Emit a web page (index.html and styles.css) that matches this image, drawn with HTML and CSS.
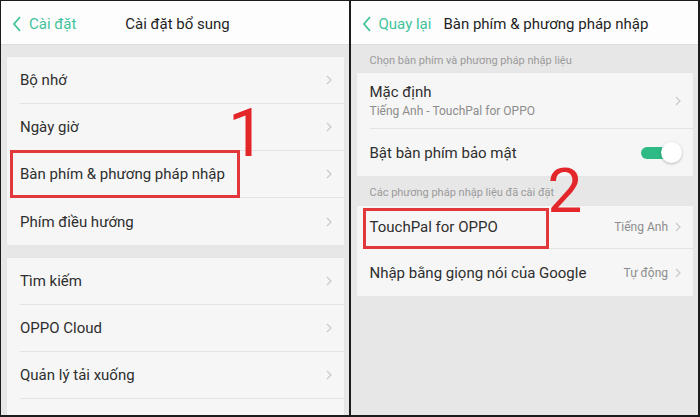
FILE: index.html
```html
<!DOCTYPE html>
<html lang="vi">
<head>
<meta charset="utf-8">
<link rel="stylesheet" href="styles.css">
</head>
<body>
<div class="frame">
  <section class="panel">
    <header class="topbar">
      <span class="back"><svg class="back-icon" viewBox="0 0 10 18"><polyline points="8,2 2,9 8,16"/></svg>Cài đặt</span>
      <span class="title title-left">Cài đặt bổ sung</span>
    </header>
    <div class="content content-left">
      <div class="card">
        <div class="row"><span class="label">Bộ nhớ</span><svg class="chev" viewBox="0 0 6 10"><polyline points="1,1 5,5 1,9"/></svg></div>
        <div class="row"><span class="label">Ngày giờ</span><svg class="chev" viewBox="0 0 6 10"><polyline points="1,1 5,5 1,9"/></svg></div>
        <div class="row"><span class="label">Bàn phím &amp; phương pháp nhập</span><svg class="chev" viewBox="0 0 6 10"><polyline points="1,1 5,5 1,9"/></svg></div>
        <div class="row"><span class="label">Phím điều hướng</span><svg class="chev" viewBox="0 0 6 10"><polyline points="1,1 5,5 1,9"/></svg></div>
      </div>
      <div class="card card-gap">
        <div class="row"><span class="label">Tìm kiếm</span><svg class="chev" viewBox="0 0 6 10"><polyline points="1,1 5,5 1,9"/></svg></div>
        <div class="row"><span class="label">OPPO Cloud</span><svg class="chev" viewBox="0 0 6 10"><polyline points="1,1 5,5 1,9"/></svg></div>
        <div class="row"><span class="label">Quản lý tải xuống</span><svg class="chev" viewBox="0 0 6 10"><polyline points="1,1 5,5 1,9"/></svg></div>
        <div class="row row-cut"><span class="label">Hướng dẫn</span><svg class="chev" viewBox="0 0 6 10"><polyline points="1,1 5,5 1,9"/></svg></div>
      </div>
    </div>
    <div class="mark mark-1"></div>
    <div class="num num-1">1</div>
  </section>

  <section class="panel">
    <header class="topbar">
      <span class="back"><svg class="back-icon" viewBox="0 0 10 18"><polyline points="8,2 2,9 8,16"/></svg>Quay lại</span>
      <span class="title title-right">Bàn phím &amp; phương pháp nhập</span>
    </header>
    <div class="content">
      <div class="section-label">Chọn bàn phím và phương pháp nhập liệu</div>
      <div class="card">
        <div class="row row-tall">
          <div class="stack"><span class="label">Mặc định</span><span class="sub">Tiếng Anh - TouchPal for OPPO</span></div>
          <svg class="chev" viewBox="0 0 6 10"><polyline points="1,1 5,5 1,9"/></svg>
        </div>
        <div class="row">
          <span class="label">Bật bàn phím bảo mật</span>
          <span class="toggle"><span class="knob"></span></span>
        </div>
      </div>
      <div class="section-label section-label-2">Các phương pháp nhập liệu đã cài đặt</div>
      <div class="card">
        <div class="row row-short"><span class="label">TouchPal for OPPO</span><span class="value">Tiếng Anh<svg class="chev" viewBox="0 0 6 10"><polyline points="1,1 5,5 1,9"/></svg></span></div>
        <div class="row"><span class="label">Nhập bằng giọng nói của Google</span><span class="value">Tự động<svg class="chev" viewBox="0 0 6 10"><polyline points="1,1 5,5 1,9"/></svg></span></div>
      </div>
    </div>
    <div class="mark mark-2"></div>
    <div class="num num-2">2</div>
  </section>
</div>
</body>
</html>
```

FILE: styles.css
```css
* { box-sizing: border-box; }
html, body { margin: 0; padding: 0; }
body {
  font-family: "Roboto", "Noto Sans", "Liberation Sans", sans-serif;
  color: #2e2e2e;
}
.frame {
  width: 700px;
  height: 417px;
  background: #1c1c1c;
  display: flex;
  gap: 2px;
  padding: 1px 2px 2px 1px;
}
.panel {
  flex: 1;
  position: relative;
  overflow: hidden;
  background: #e7e7e7;
  display: flex;
  flex-direction: column;
}
.topbar {
  height: 43px;
  flex: none;
  background: #fdfdfd;
  display: flex;
  align-items: center;
  padding: 3px 0 0 11px;
  box-shadow: 0 1px 1px rgba(0,0,0,0.04);
}
.back {
  display: flex;
  align-items: center;
  color: #3fc39b;
  font-size: 15px;
}
.back-icon {
  width: 10px;
  height: 18px;
  margin-right: 7px;
  fill: none;
  stroke: #3fc39b;
  stroke-width: 1.8;
}
.title {
  font-size: 15px;
  color: #1f1f1f;
  font-weight: 400;
}
.title-left { margin-left: 49px; }
.title-right { margin-left: 12px; }
.content {
  flex: 1;
}
.content-left { padding-top: 13px; }
.card {
  background: #f6f6f6;
  margin: 0 5px 0 6px;
  box-shadow: 0 0 1px rgba(0,0,0,0.06);
}
.card-gap { margin-top: 13px; }
.row {
  margin-left: 13px;
  padding-right: 12px;
  height: 47px;
  display: flex;
  align-items: center;
  justify-content: space-between;
  border-bottom: 1px solid #e3e3e3;
}
.card .row:last-child { border-bottom: none; }
.row-tall { height: 56px; }
.row-short { height: 43px; }
.row-cut { height: 38px; align-items: flex-end; }
.label { font-size: 15px; color: #2e2e2e; }
.stack { display: flex; flex-direction: column; gap: 3px; }
.sub { font-size: 12px; color: #8c8c8c; }
.chev {
  width: 6px;
  height: 10px;
  fill: none;
  stroke: #c9c9c9;
  stroke-width: 1.2;
}
.value {
  display: flex;
  align-items: center;
  gap: 7px;
  font-size: 12px;
  color: #8c8c8c;
}
.section-label {
  height: 29px;
  padding: 3px 0 0 19px;
  display: flex;
  align-items: center;
  font-size: 11px;
  color: #9a9a9a;
}
.section-label-2 { height: 30px; padding: 3px 0 0 19px; }
.toggle {
  position: relative;
  width: 38px;
  height: 12px;
  margin-right: 2px;
  border-radius: 6px;
  background: #2dba84;
}
.knob {
  position: absolute;
  right: -3px;
  top: -5px;
  width: 21px;
  height: 21px;
  border-radius: 50%;
  background: #ffffff;
  box-shadow: 0 1px 3px rgba(0,0,0,0.25);
}
.mark {
  position: absolute;
  border: 3px solid #e2373b;
}
.mark-1 { left: 9px; top: 149px; width: 230px; height: 48px; }
.mark-2 { left: 12px; top: 207px; width: 186px; height: 41px; }
.num {
  position: absolute;
  color: #e3262a;
  font-family: "Roboto", "Liberation Sans", sans-serif;
  line-height: 1;
}
.num-1 { left: 227px; top: 100px; font-size: 66px; }
.num-2 { left: 197px; top: 159px; font-size: 62px; }
```
